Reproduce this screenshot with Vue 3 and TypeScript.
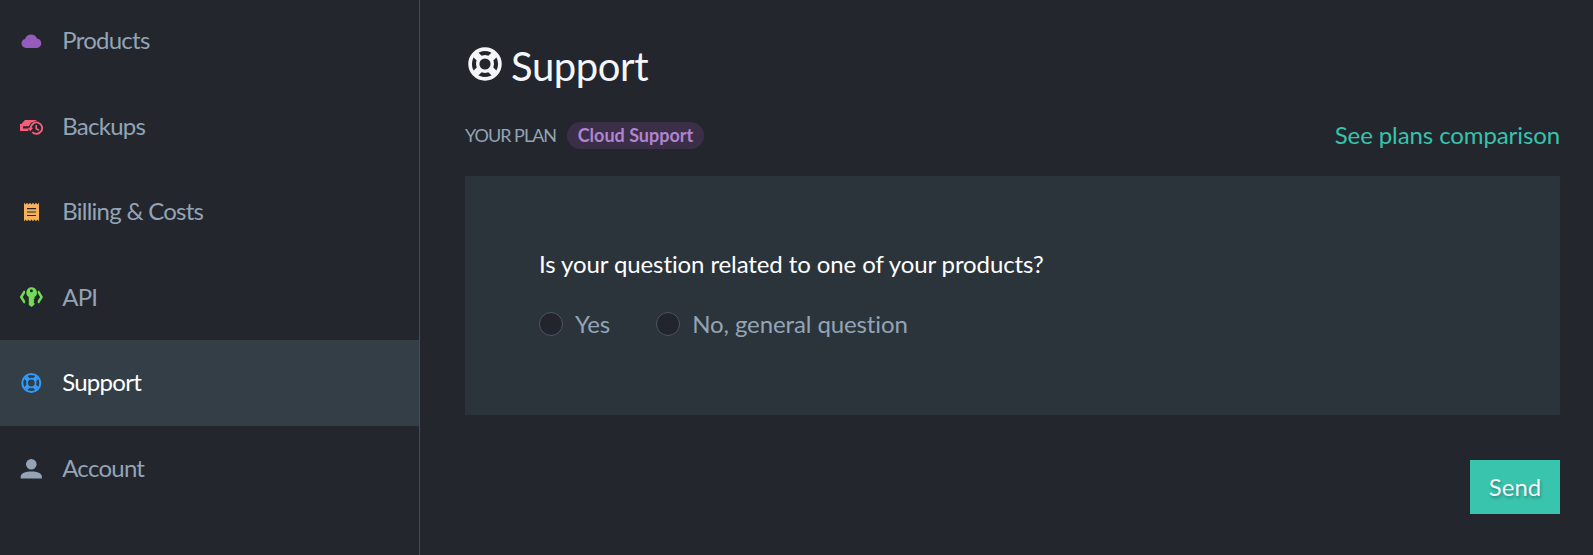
<script setup lang="ts">
import { ref } from 'vue'

type IconName = 'cloud' | 'backup' | 'receipt' | 'api' | 'ring' | 'user'

interface NavItem {
  label: string
  icon: IconName
}

const items: NavItem[] = [
  { label: 'Products', icon: 'cloud' },
  { label: 'Backups', icon: 'backup' },
  { label: 'Billing & Costs', icon: 'receipt' },
  { label: 'API', icon: 'api' },
  { label: 'Support', icon: 'ring' },
  { label: 'Account', icon: 'user' },
]
const active = ref('Support')
const answer = ref('')
</script>

<template>
  <div class="page">
    <nav class="sidebar">
      <a
        v-for="item in items"
        :key="item.label"
        class="item"
        :class="[item.icon, { active: item.label === active }]"
        @click="active = item.label"
      >
        <svg class="icon" viewBox="0 0 24 24" fill="currentColor">
          <path
            v-if="item.icon === 'cloud'"
            d="M7 19C4.500 19 2.500 17 2.500 14.300C2.500 12 4 10.300 6 9.900C7 7.300 9.300 5.500 12.100 5.500C14.800 5.500 17 7.100 17.900 9.500C20.400 9.600 22.300 11.700 22.300 14.300C22.300 17 20.400 19 17.800 19Z"
          />
          <g v-else-if="item.icon === 'backup'">
            <path d="M6 6H18L15.500 7.600A7 7 0 0 0 10.300 11H1.400Z" />
            <path d="M1 10H11L9.800 12.200H4V14.400H9.500V17H1Z" />
            <path
              d="M11.700 14.200A5.700 5.700 0 1 1 13.300 18.100"
              fill="none"
              stroke="currentColor"
              stroke-width="1.900"
            />
            <path d="M8.600 13.800H14.200L11.400 17.200Z" />
            <path
              d="M17.200 11V14.700L20 16.300"
              fill="none"
              stroke="currentColor"
              stroke-width="1.600"
            />
          </g>
          <g v-else-if="item.icon === 'receipt'">
            <path
              d="M5 2.500L6.500 4.500L8 2.700L9.500 4.500L11 2.700L12.500 4.500L14 2.700L15.500 4.500L17 2.700L18.500 4.500L20 2.500V21.500L18.500 19.500L17 21.300L15.500 19.500L14 21.300L12.500 19.500L11 21.300L9.500 19.500L8 21.300L6.500 19.500L5 21.500Z"
            />
            <path d="M8 8.600H17M8 12H17M8 15.500H17" stroke="#23262e" stroke-width="1.200" />
          </g>
          <g v-else-if="item.icon === 'api'">
            <path
              fill-rule="evenodd"
              d="M12.400 2.200A5.400 5.400 0 0 1 15.500 12.100V13.800L14.500 14.800L15.500 15.900L14.500 17L15.500 18.200V19.600L12.700 21.900L9.800 20V12.100A5.400 5.400 0 0 1 12.400 2.200ZM12.400 4.200A1.500 1.500 0 1 0 12.400 7.200A1.500 1.500 0 1 0 12.400 4.200Z"
            />
            <path
              d="M6 7H5.300L2.200 12L5.300 17H6M18.800 7H19.500L22.600 12L19.500 17H18.800"
              fill="none"
              stroke="currentColor"
              stroke-width="2.400"
            />
          </g>
          <g v-else-if="item.icon === 'ring'" fill="none" stroke="currentColor">
            <circle cx="12.300" cy="12" r="9" stroke-width="2" />
            <circle cx="12.300" cy="12" r="4.300" stroke-width="1.800" />
            <path
              d="M9.500 9.200L6.600 6.300M15.100 9.200L18 6.300M9.500 14.800L6.600 17.700M15.100 14.800L18 17.700"
              stroke-width="4.300"
            />
          </g>
          <g v-else>
            <circle cx="12.300" cy="7.300" r="5.300" />
            <path d="M1.700 21.400V19.600C1.700 16.100 6.400 14.400 12.300 14.400S22.900 16.100 22.900 19.600V21.400Z" />
          </g>
        </svg>
        <span class="item-label">{{ item.label }}</span>
      </a>
    </nav>

    <main class="content">
      <h1 class="title">
        <svg class="title-icon" viewBox="0 0 36 36" fill="none" stroke="currentColor">
          <circle cx="18" cy="18" r="14.900" stroke-width="3.700" />
          <circle cx="18" cy="18" r="7.300" stroke-width="3.400" />
          <path
            d="M13 13L8.400 8.400M23 13L27.600 8.400M13 23L8.400 27.600M23 23L27.600 27.600"
            stroke-width="6.800"
          />
        </svg>
        <span>Support</span>
      </h1>

      <div class="plan">
        <span class="plan-label">YOUR PLAN</span>
        <span class="badge">Cloud Support</span>
        <a class="compare">See plans comparison</a>
      </div>

      <section class="panel">
        <p class="question">Is your question related to one of your products?</p>
        <div class="options">
          <label class="option">
            <input v-model="answer" type="radio" value="yes" />
            <span>Yes</span>
          </label>
          <label class="option">
            <input v-model="answer" type="radio" value="no" />
            <span>No, general question</span>
          </label>
        </div>
      </section>

      <button class="send">Send</button>
    </main>
  </div>
</template>

<style>
body {
  margin: 0;
  background: #23262d;
}
</style>

<style scoped>
.page {
  display: flex;
  height: 555px;
  overflow: hidden;
  background: #23262d;
  color: #92a4b5;
  font: 24px/32px Lato, sans-serif;
  font-variant-ligatures: none;
}
.sidebar {
  box-sizing: border-box;
  flex: none;
  width: 420px;
  border-right: 1px solid #484c54;
}
.item {
  display: flex;
  align-items: center;
  box-sizing: border-box;
  height: 85.600px;
  padding-left: 19px;
  gap: 19.200px;
  letter-spacing: -0.740px;
  cursor: pointer;
}
.item:first-child {
  margin-top: -2.200px;
}
.item-label {
  margin-top: -1.100px;
}
.icon {
  flex: none;
  width: 24px;
  height: 24px;
}
.cloud .icon { color: #965cbc; }
.backup .icon { color: #f55d78; }
.receipt .icon { color: #f7b15c; }
.api .icon { color: #73db57; }
.ring .icon { color: #2f9bff; }
.user .icon { color: #92a4b5; }
.active {
  background: #343e47;
  color: #fff;
}
.content {
  display: flex;
  flex: 1;
  flex-direction: column;
  padding: 40px 33px 0 45px;
}
.title {
  display: flex;
  align-items: center;
  height: 54px;
  margin: 0;
  gap: 7.500px;
  color: #f4f6fa;
  font-size: 40px;
  font-weight: 400;
  letter-spacing: -0.400px;
  line-height: 52px;
}
.title span {
  margin-top: -2px;
}
.title-icon {
  width: 38px;
  height: 36px;
  margin: -6px 0 0 0.500px;
}
.plan {
  display: flex;
  align-items: center;
  height: 32px;
  margin-top: 25px;
}
.plan-label {
  font-size: 18px;
  letter-spacing: -1px;
}
.badge {
  margin-left: 10.800px;
  padding: 0 10.800px;
  border-radius: 14px;
  background: #3a2f47;
  color: #b183d0;
  font-size: 18px;
  font-weight: 700;
  line-height: 27px;
}
.compare {
  margin-left: auto;
  color: #36c3ac;
  letter-spacing: -0.100px;
}
.panel {
  box-sizing: border-box;
  height: 239px;
  margin-top: 25px;
  padding: 72px 74px;
  background: #2c343b;
  letter-spacing: -0.100px;
}
.question {
  margin: 0;
  color: #fff;
}
.options {
  display: flex;
  margin-top: 28px;
  gap: 46px;
}
.option {
  display: flex;
  align-items: center;
  gap: 12px;
}
.option input {
  box-sizing: border-box;
  width: 24px;
  height: 24px;
  margin: 0;
  border: 1px solid #4b5566;
  border-radius: 50%;
  appearance: none;
  background: #22252d;
}
.option input:checked {
  border: 7px solid #36c3ac;
}
.send {
  align-self: flex-end;
  width: 90px;
  height: 54px;
  margin-top: 45px;
  padding: 0;
  border: 0;
  background: #38c4ad;
  color: #f4f6fa;
  font: inherit;
  text-shadow: 1px 2px 3px rgba(0, 0, 0, 0.300);
}
</style>
